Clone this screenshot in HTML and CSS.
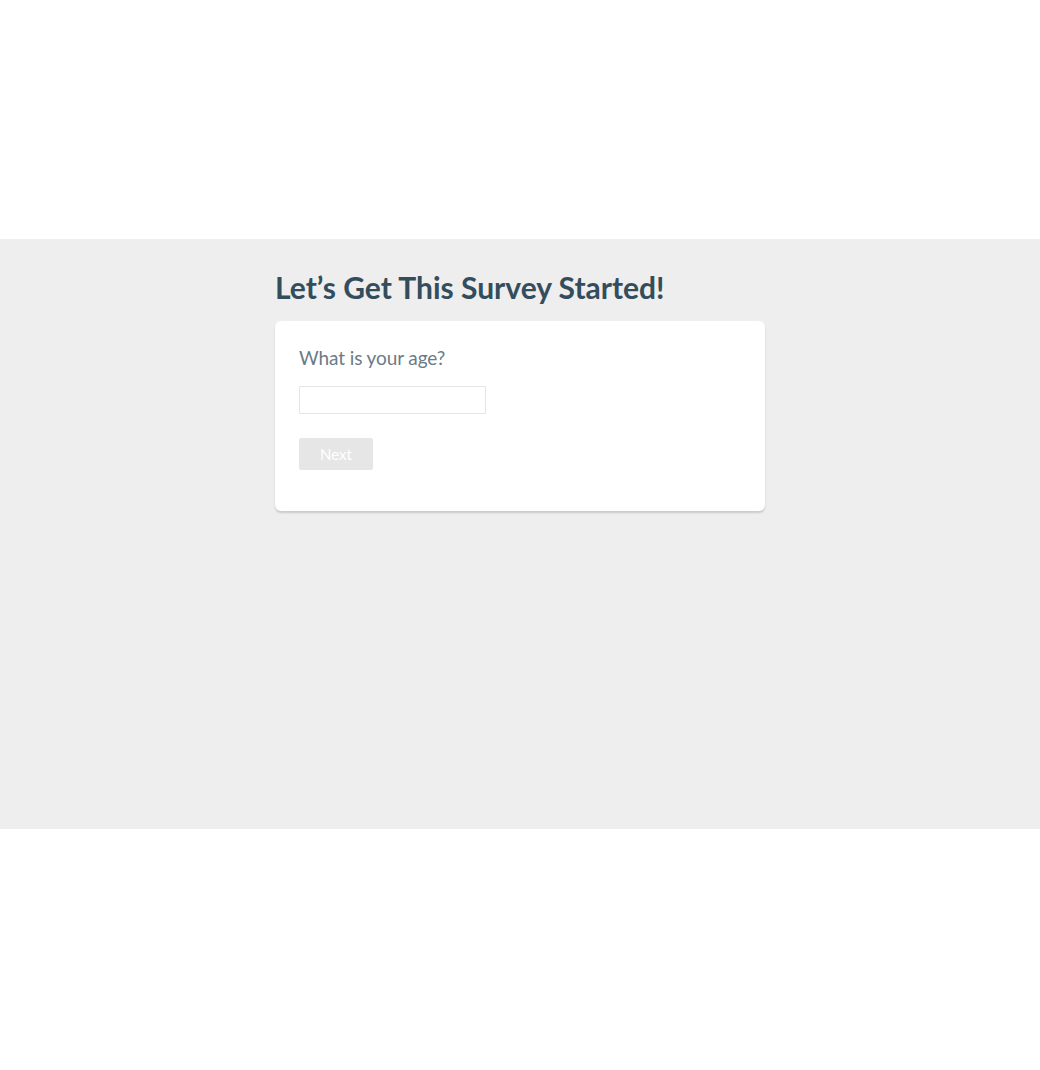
FILE: index.html
```html
<!DOCTYPE html>
<html>
  <head>
    <meta charset="utf-8" />
    <meta name="viewport" content="width=device-width, initial-scale=1" />
    <link rel="stylesheet" href="styles.css">
  </head>

  <body>
    <div class="top"></div>
    <main class="stage">
        <div class="survey">
            <h1>Let’s Get This Survey Started!</h1>
            <form class="card">
                <label for="age">What is your age?</label>
                <input type="text" id="age">
                <button type="button" disabled>Next</button>
            </form>
        </div>
    </main>
  </body>
</html>
```

FILE: styles.css
```css
body {
  margin: 0;
  font-family: Lato, "Open Sans", Arial, sans-serif;
  background: #fff;
}
.top {
  height: 239px;
}
.stage {
  background: #eeeeee;
  height: 590px;
  padding-top: 30px;
  box-sizing: border-box;
}
.survey {
  width: 490px;
  margin: 0 auto;
}
h1 {
  margin: 0 0 16px;
  font-size: 30px;
  font-weight: 700;
  color: #344d5c;
}
.card {
  background: #fff;
  border-radius: 6px;
  box-shadow: 0 2px 2px rgba(0, 0, 0, 0.15);
  padding: 25px 24px 41px;
  display: flex;
  flex-direction: column;
  align-items: flex-start;
}
.card label {
  font-size: 19px;
  color: #6a7b86;
  letter-spacing: -0.1px;
  margin-bottom: 17px;
}
.card input {
  width: 187px;
  height: 28px;
  box-sizing: border-box;
  border: 1px solid #e6e6e6;
  margin: 0 0 24px;
  padding: 4px 6px;
}
.card button {
  width: 74px;
  height: 32px;
  border: 0;
  border-radius: 2px;
  background: #e6e6e6;
  color: #fff;
  font-family: inherit;
  font-size: 15px;
}
```
